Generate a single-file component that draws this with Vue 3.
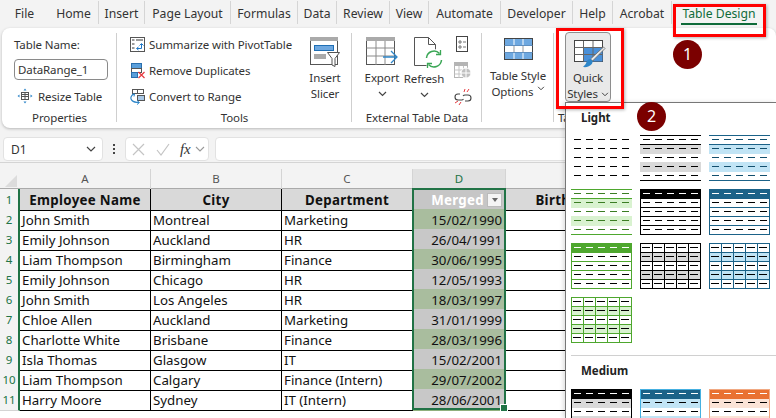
<template>
  <div class="excel">
    <div class="tabs">
      <div v-for="t in tabs" :key="t" class="tab" :class="{ active: t === 'Table Design' }">{{ t }}</div>
    </div>

    <div class="ribbon">
      <section class="group g-props">
        <div class="group-body props-body">
          <div class="field-label">Table Name:</div>
          <div class="name-input">DataRange_1</div>
          <div class="resize">
            <svg width="16" height="16" viewBox="0 0 16 16" fill="none">
              <rect x="4.500" y="4.500" width="7" height="7" stroke="#555" />
              <path d="M4.500 6.500h7M4.500 8.500h7M8 4.500v7" stroke="#555" />
              <path d="M8 .5 6.500 2.500h3zM8 15.500 6.500 13.500h3zM.5 8l2-1.500v3zM15.500 8l-2-1.500v3z" fill="#2e86c9" />
            </svg>
            <span>Resize Table</span>
          </div>
        </div>
        <div class="group-label">Properties</div>
      </section>

      <section class="group g-tools">
        <div class="group-body tools-body">
          <div class="tool-list">
            <div class="tool-row">
              <svg width="17" height="17" viewBox="0 0 17 17" fill="none">
                <rect x="1.500" y="1.500" width="14" height="14" stroke="#555" fill="#fff" />
                <path d="M3 3h2.500v2H3zM7 3h7v2H7zM3 7h2.500v2H3zM3 11h2.500v2H3z" fill="#9a9a9a" />
                <path d="M8 12.500h4.500V8M10.500 9.500 12.500 7.500l2 2M9.500 11 7.500 12.500 9.500 14" stroke="#1f78c8" />
              </svg>
              <span>Summarize with PivotTable</span>
            </div>
            <div class="tool-row">
              <svg width="17" height="17" viewBox="0 0 17 17" fill="none">
                <rect x="2.500" y="1.500" width="10" height="5" fill="#5a9fdb" stroke="#2a6fae" />
                <rect x="2.500" y="6.500" width="10" height="4" fill="#fff" stroke="#555" />
                <rect x="2.500" y="10.500" width="6" height="5" fill="#5a9fdb" stroke="#2a6fae" />
                <path d="m9.500 10 6 6M15.500 10l-6 6" stroke="#e6393f" stroke-width="1.200" />
              </svg>
              <span>Remove Duplicates</span>
            </div>
            <div class="tool-row">
              <svg width="17" height="17" viewBox="0 0 17 17" fill="none">
                <rect x="3.500" y="1.500" width="5" height="4" fill="#fff" stroke="#555" />
                <rect x="8.500" y="1.500" width="6" height="4" fill="#fff" stroke="#555" />
                <rect x="8.500" y="7.500" width="7" height="5" fill="#a9c8e6" stroke="#555" />
                <path d="M5 6C1.500 7.500 1 10.500 3 12.500c1.500 1.500 4 2 7 2" stroke="#2e86c9" stroke-width="1.200" />
                <path d="M3 6.500 5.500 6 5 8.500M8 12.500l2.500 2L8 16.500" stroke="#2e86c9" />
              </svg>
              <span>Convert to Range</span>
            </div>
          </div>
          <div class="big-btn slicer">
            <svg width="32" height="32" viewBox="0 0 32 32" fill="none">
              <rect x="1.500" y=".5" width="27" height="27" stroke="#555" fill="#fff" />
              <rect x="1" y="0" width="28" height="4" fill="#aaa" />
              <rect x="5.500" y="8.500" width="19" height="5" fill="#6ea8e0" stroke="#1f6fb5" />
              <rect x="5" y="17" width="12" height="5" fill="#aaa" />
              <path d="M18.500 15.500h12l-4.500 6v8l-3-1.500v-6.500z" fill="#fff" stroke="#555" />
            </svg>
            <span>Insert</span>
            <span>Slicer</span>
          </div>
        </div>
        <div class="group-label">Tools</div>
      </section>

      <section class="group g-ext">
        <div class="group-body ext-body">
          <div class="big-btn export">
            <svg width="32" height="31" viewBox="0 0 32 31" fill="none">
              <rect x=".5" y=".5" width="28" height="27" fill="#fff" stroke="#555" />
              <rect x="0" y="0" width="29" height="4" fill="#aaa" />
              <path d="M.5 11h28M.5 19h28M10 4v24M19 4v24" stroke="#8a8a8a" />
              <path d="M17 20h14M25 14l6 6-6 6" stroke="#2e86c9" stroke-width="1.300" fill="none" />
            </svg>
            <span>Export</span>
            <svg class="chev" width="9" height="6" viewBox="0 0 9 6" fill="none"><path d="m1 1 3.500 3.500L8 1" stroke="#444" stroke-width="1.200" /></svg>
          </div>
          <div class="big-btn refresh">
            <svg width="30" height="32" viewBox="0 0 30 32" fill="none">
              <path d="M1.500.5h14l7 7v21h-21z" fill="#fff" stroke="#555" />
              <path d="M15.500.5v7h7" stroke="#555" />
              <circle cx="21" cy="22" r="10" fill="#fff" />
              <path d="M13.500 21a7.500 7.500 0 0 1 13-4.500M28.500 23a7.500 7.500 0 0 1-13 4.500" stroke="#3aa655" stroke-width="1.500" />
              <path d="M27.500 13v4.500H23M14.500 31v-4.500H19" stroke="#3aa655" stroke-width="1.300" />
            </svg>
            <span>Refresh</span>
            <svg class="chev" width="9" height="6" viewBox="0 0 9 6" fill="none"><path d="m1 1 3.500 3.500L8 1" stroke="#444" stroke-width="1.200" /></svg>
          </div>
          <div class="small-icons">
            <svg width="16" height="17" viewBox="0 0 16 17" fill="none">
              <rect x="2.500" y=".5" width="11" height="15" stroke="#444" fill="#fff" />
              <path d="M5 5h2v2H5zM5 10h2v2H5z" stroke="#777" />
              <path d="M9 6h3M9 11h3" stroke="#777" />
            </svg>
            <svg width="18" height="17" viewBox="0 0 18 17" fill="none">
              <rect x=".5" y=".5" width="13" height="15" fill="#fff" stroke="#b5b5b5" />
              <rect x="0" y="0" width="14" height="4" fill="#b5b5b5" />
              <path d="M.5 8h13M.5 12h13M5 4v12M9.500 4v12" stroke="#c5c5c5" />
              <circle cx="12" cy="11" r="5" fill="#c0c0c0" stroke="#fff" />
              <path d="M7 11h10M12 6v10" stroke="#fff" />
            </svg>
            <svg width="18" height="17" viewBox="0 0 18 17" fill="none">
              <path d="M6 6H4a3 3 0 0 0 0 6h4a3 3 0 0 0 1.500-1M9 8a3 3 0 0 1 2-1h3a3 3 0 0 1 0 6h-3" stroke="#444" stroke-width="1.100" />
              <path d="M11 1 10 4M15 1l-2 3M5 17l2-3M1 15l3-2" stroke="#e6393f" />
            </svg>
          </div>
        </div>
        <div class="group-label">External Table Data</div>
      </section>

      <section class="group g-opts">
        <div class="group-body opts-body">
          <div class="big-btn options">
            <svg width="29" height="22" viewBox="0 0 29 22" fill="none">
              <rect x=".5" y=".5" width="28" height="21" fill="#fff" stroke="#444" />
              <rect x="1" y="1" width="27" height="6.500" fill="#6ea8e0" />
              <rect x="1" y="14.500" width="27" height="6.500" fill="#6ea8e0" />
              <path d="M10 1v6.500M19 1v6.500M10 14.500V21M19 14.500V21" stroke="#fff" />
              <path d="M10 7.500v7M19 7.500v7" stroke="#999" />
              <path d="M.5 7.500h28M.5 14.500h28" stroke="#5f8fc0" />
            </svg>
            <span>Table Style</span>
            <span class="with-chev">Options
              <svg width="8" height="5" viewBox="0 0 9 6" fill="none"><path d="m1 1 3.500 3.500L8 1" stroke="#444" stroke-width="1.200" /></svg>
            </span>
          </div>
        </div>
      </section>

      <section class="group g-styles">
        <div class="group-body styles-body">
          <div class="quick-btn">
            <svg width="32" height="30" viewBox="0 0 32 30" fill="none">
              <rect x=".5" y=".5" width="28" height="21" fill="#fff" stroke="#444" />
              <rect x="9.500" y="7.500" width="19" height="14" fill="#4a90d9" />
              <path d="M.5 7.500h28M.5 14.500h28M9.500 1v20M19 1v20" stroke="#666" />
              <path d="M29.500 7 31 8.500 18.500 21 16.500 19z" fill="#e8e8e8" stroke="#666" stroke-width=".8" />
              <path d="M16.500 19c-2.500.2-3.500 1.500-4 3-.5 2-2 3.500-3.500 5 3.500.5 7-.5 8.800-3 .7-1 .8-2 .7-3z" fill="#2e86c9" />
            </svg>
            <span>Quick</span>
            <span class="with-chev">Styles
              <svg width="8" height="5" viewBox="0 0 9 6" fill="none"><path d="m1 1 3.500 3.500L8 1" stroke="#444" stroke-width="1.200" /></svg>
            </span>
          </div>
        </div>
        <div class="group-label styles-label">Ta</div>
      </section>
    </div>

    <div class="formula-bar">
      <div class="name-box">
        <span>D1</span>
        <svg width="10" height="6" viewBox="0 0 10 6" fill="none"><path d="m1 1 4 4 4-4" stroke="#444" stroke-width="1.200" /></svg>
      </div>
      <div class="dots"><i></i><i></i><i></i></div>
      <div class="fx-box">
        <svg width="13" height="13" viewBox="0 0 13 13" fill="none"><path d="m1 1 11 11M12 1 1 12" stroke="#c4c4c4" stroke-width="1.200" /></svg>
        <svg width="14" height="13" viewBox="0 0 14 13" fill="none"><path d="m1 7 4 5 8-11" stroke="#c4c4c4" stroke-width="1.200" /></svg>
        <span class="fx">fx</span>
        <svg width="10" height="6" viewBox="0 0 10 6" fill="none"><path d="m1 1 4 4 4-4" stroke="#999" stroke-width="1.100" /></svg>
      </div>
      <div class="formula-input"></div>
    </div>

    <div class="sheet">
      <div class="col-heads">
        <div class="corner"><div class="tri"></div></div>
        <div v-for="c in columns" :key="c" class="col-head" :class="{ sel: c === 'D' }">{{ c }}</div>
      </div>
      <div class="sheet-row head-row">
        <div class="row-num">1</div>
        <div class="cell head">Employee Name</div>
        <div class="cell head">City</div>
        <div class="cell head">Department</div>
        <div class="cell head merged">
          <span>Merged</span>
          <span class="filter"><i></i></span>
        </div>
        <div class="cell head">Birth Date</div>
      </div>
      <div v-for="(r, i) in rows" :key="i" class="sheet-row">
        <div class="row-num">{{ i + 2 }}</div>
        <div class="cell">{{ r[0] }}</div>
        <div class="cell">{{ r[1] }}</div>
        <div class="cell">{{ r[2] }}</div>
        <div class="cell date" :class="i % 2 ? 'date-even' : 'date-odd'">{{ r[3] }}</div>
        <div class="cell"></div>
      </div>
      <div class="selection"><div class="handle"></div></div>
    </div>

    <div class="styles-menu">
      <div class="menu-title">Light</div>
      <div class="thumbs">
        <svg v-for="(t, i) in light" :key="i" width="61" height="46" viewBox="0 0 61 46" shape-rendering="crispEdges">
          <rect v-for="(p, j) in t" :key="j" :x="p.x" :y="p.y" :width="p.w" :height="p.h" :fill="p.c" />
        </svg>
      </div>
      <div class="menu-sep"></div>
      <div class="menu-title medium">Medium</div>
      <div class="thumbs">
        <svg v-for="(t, i) in medium" :key="i" width="61" height="46" viewBox="0 0 61 46" shape-rendering="crispEdges">
          <rect v-for="(p, j) in t" :key="j" :x="p.x" :y="p.y" :width="p.w" :height="p.h" :fill="p.c" />
        </svg>
      </div>
    </div>

    <div class="red-box box-tab"></div>
    <div class="red-box box-quick"></div>
    <div class="badge badge-1">1</div>
    <div class="badge badge-2">2</div>
  </div>
</template>

<script setup>
const tabs = ['File', 'Home', 'Insert', 'Page Layout', 'Formulas', 'Data', 'Review', 'View', 'Automate', 'Developer', 'Help', 'Acrobat', 'Table Design']
const columns = ['A', 'B', 'C', 'D', 'E']

const rows = [
  ['John Smith', 'Montreal', 'Marketing', '15/02/1990'],
  ['Emily Johnson', 'Auckland', 'HR', '26/04/1991'],
  ['Liam Thompson', 'Birmingham', 'Finance', '30/06/1995'],
  ['Emily Johnson', 'Chicago', 'HR', '12/05/1993'],
  ['John Smith', 'Los Angeles', 'HR', '18/03/1997'],
  ['Chloe Allen', 'Auckland', 'Marketing', '31/01/1999'],
  ['Charlotte White', 'Brisbane', 'Finance', '28/03/1996'],
  ['Isla Thomas', 'Glasgow', 'IT', '15/02/2001'],
  ['Liam Thompson', 'Calgary', 'Finance (Intern)', '29/07/2002'],
  ['Harry Moore', 'Sydney', 'IT (Intern)', '28/06/2001'],
]

const BLACK = '#000'
const BLUE = '#1b6288'
const GREEN = '#4ea72e'

// one thumbnail as a list of rects, 5 rows of 5 dashes
function thumb({ line, band, dash = BLACK, kind, border, head }) {
  const out = []
  const add = (x, y, w, h, c) => out.push({ x, y, w, h, c })
  const rowTop = i => i * 9

  if (band) {
    add(0, rowTop(1), 61, 10, band)
    add(0, rowTop(3), 61, 10, band)
  }
  if (kind === 'stripe') {
    add(0, 0, 61, 1, line)
    add(0, 9, 61, 1, line)
    add(0, 45, 61, 1, line)
  }
  if (kind === 'head' || kind === 'medium') add(0, 0, 61, 10, head)
  if (kind === 'head' || kind === 'grid') {
    for (let i = 1; i < 5; i++) add(0, rowTop(i), 61, 1, line)
  }
  if (kind === 'grid') {
    for (let j = 1; j < 5; j++) add(j * 12, 0, 1, 46, line)
  }
  if (kind === 'head' || kind === 'grid' || kind === 'medium') {
    const b = border || line
    add(0, 0, 61, 1, b)
    add(0, 45, 61, 1, b)
    add(0, 0, 1, 46, b)
    add(60, 0, 1, 46, b)
  }
  for (let i = 0; i < 5; i++) {
    for (let j = 0; j < 5; j++) {
      const white = (kind === 'head' || kind === 'medium') && i === 0
      if (kind === 'grid') add(2 + j * 12, 4 + i * 9, 8, 1, dash)
      else add(3 + j * 12, 4 + i * 9, 7, 1, white ? '#fff' : dash)
    }
  }
  return out
}

const light = [
  thumb({ kind: 'plain' }),
  thumb({ kind: 'stripe', line: BLACK, band: '#d9d9d9' }),
  thumb({ kind: 'stripe', line: BLUE, band: '#c1e4f5', dash: '#124f6e' }),
  thumb({ kind: 'stripe', line: GREEN, band: '#d9f2d0', dash: '#3b7d23' }),
  thumb({ kind: 'head', line: BLACK, head: BLACK }),
  thumb({ kind: 'head', line: BLUE, head: BLUE }),
  thumb({ kind: 'head', line: GREEN, head: GREEN }),
  thumb({ kind: 'grid', line: BLACK, band: '#d9d9d9' }),
  thumb({ kind: 'grid', line: BLUE, band: '#c1e4f5' }),
  thumb({ kind: 'grid', line: GREEN, band: '#d9f2d0' }),
]

const medium = [
  thumb({ kind: 'medium', head: BLACK, border: BLACK, band: '#d9d9d9' }),
  thumb({ kind: 'medium', head: BLUE, border: '#45b0e1', band: '#c1e4f5' }),
  thumb({ kind: 'medium', head: '#e97132', border: '#f1a983', band: '#fbe3d6' }),
]
</script>

<style>
html, body {
  margin: 0;
  background: #f3f3f3;
}
</style>

<style scoped>
.excel {
  position: relative;
  width: 776px;
  height: 418px;
  overflow: hidden;
  background: #f3f3f3;
  font-family: "Noto Sans", sans-serif;
  font-size: 11.5px;
  letter-spacing: -0.1px;
  color: #333;
}

/* tabs */
.tabs {
  display: grid;
  grid-template-columns: 49px 50px 46px 86px 67px 39px 53px 39px 72px 72px 40px 59px 94px;
  height: 28px;
}
.tab {
  position: relative;
  height: 23px;
  margin-top: 1px;
  text-align: center;
  line-height: 25px;
  font-size: 12.2px;
  letter-spacing: 0;
  border-right: 1px solid #d5d5d5;
  box-sizing: border-box;
}
.tab:first-child { border-right: 0; }
.tab.active {
  border-right: 0;
  color: #0f6b3a;
}
.tab.active::after {
  content: "";
  position: absolute;
  left: 9px;
  right: 9px;
  bottom: -1px;
  height: 2px;
  background: #0f6b3a;
}

/* ribbon */
.ribbon {
  display: flex;
  height: 100px;
  margin-left: 2px;
  background: #fff;
  border-radius: 8px;
  box-shadow: 0 1px 3px rgba(0, 0, 0, 0.25);
  box-sizing: border-box;
}
.group {
  display: flex;
  flex-direction: column;
  position: relative;
}
.group::after {
  content: "";
  position: absolute;
  right: 0;
  top: 5px;
  bottom: 6px;
  width: 1px;
  background: #cfcfcf;
}
.group-body {
  flex: 1;
  min-height: 0;
}
.group-label {
  height: 20px;
  line-height: 20px;
  text-align: center;
  white-space: nowrap;
}
.g-props { width: 115px; }
.g-tools { width: 235px; }
.g-ext { width: 130px; }
.g-opts { width: 72px; }
.g-styles { flex: 1; }
.g-styles::after { display: none; }
.styles-label {
  text-align: left;
  padding-left: 4px;
}

.props-body {
  display: flex;
  flex-direction: column;
  padding: 8px 0 0 12px;
}
.field-label { line-height: 18px; }
.name-input {
  width: 94px;
  height: 21px;
  margin-top: 5px;
  padding-left: 3px;
  box-sizing: border-box;
  border: 1px solid #8a8a8a;
  border-radius: 4px;
  line-height: 19px;
  white-space: nowrap;
}
.resize {
  display: flex;
  align-items: center;
  gap: 5px;
  margin: 8px 0 0 3px;
  white-space: nowrap;
}

.tools-body {
  display: flex;
  padding-left: 12px;
}
.tool-list {
  width: 178px;
  padding-top: 7px;
}
.tool-row {
  display: flex;
  align-items: center;
  gap: 3px;
  height: 18px;
  margin-bottom: 8px;
  white-space: nowrap;
}
.big-btn {
  display: flex;
  flex-direction: column;
  align-items: center;
  line-height: 16px;
  white-space: nowrap;
}
.big-btn svg { flex-shrink: 0; }
.slicer { padding-top: 9px; width: 36px; }
.slicer svg { margin-bottom: 1px; }

.ext-body { display: flex; }
.export { margin-left: 11px; width: 38px; padding-top: 9px; }
.export svg:first-child { margin-bottom: 2px; }
.refresh { margin-left: 3px; width: 40px; padding-top: 9px; }
.refresh svg:first-child { margin: 0 0 2px 8px; }
.chev { margin-top: 5px; }
.small-icons {
  display: flex;
  flex-direction: column;
  gap: 9px;
  margin: 8px 0 0 10px;
}

.opts-body { padding-top: 10px; }
.options svg:first-child { margin-bottom: 8px; }
.with-chev {
  display: inline-flex;
  align-items: center;
  gap: 3px;
}

.styles-body { padding-top: 4px; }
.quick-btn {
  display: flex;
  flex-direction: column;
  align-items: center;
  width: 46px;
  height: 70px;
  margin-left: 11px;
  padding-top: 7px;
  box-sizing: border-box;
  background: #e9e9e9;
  border: 1px solid #8e8e8e;
  border-radius: 4px;
  line-height: 16px;
}
.quick-btn > svg { flex-shrink: 0; margin-left: 3px; }

/* formula bar */
.formula-bar {
  display: flex;
  align-items: center;
  height: 26px;
  margin-top: 8px;
  padding-left: 3px;
}
.name-box, .fx-box, .formula-input {
  height: 24px;
  box-sizing: border-box;
  background: #fff;
  border: 1px solid #e2e2e2;
  border-radius: 4px;
}
.name-box {
  display: flex;
  align-items: center;
  justify-content: space-between;
  width: 100px;
  padding: 0 6px 0 7px;
  font-size: 12px;
}
.dots {
  display: flex;
  flex-direction: column;
  gap: 2px;
  width: 22px;
  align-items: center;
}
.dots i {
  width: 2px;
  height: 2px;
  background: #444;
}
.fx-box {
  display: flex;
  align-items: center;
  width: 84px;
  padding-left: 6px;
  gap: 11px;
}
.fx {
  font-family: "Liberation Serif", serif;
  font-style: italic;
  font-size: 15px;
  color: #333;
  margin-left: -1px;
  margin-right: -9px;
}
.fx-box svg:last-child { margin-left: 2px; }
.formula-input {
  width: 500px;
  margin-left: 6px;
}

/* sheet */
.sheet {
  position: relative;
  background: #fff;
  height: 256px;
  font-size: 13.3px;
  letter-spacing: 0;
  color: #111;
  border-top: 1px solid #d4d4d4;
  box-sizing: border-box;
}
.col-heads, .sheet-row {
  display: grid;
  grid-template-columns: 20px 131px 131px 131px 93px 131px;
}
.col-heads {
  height: 26px;
  background: #f3f3f3;
  padding-top: 6px;
  box-sizing: border-box;
  border-bottom: 1px solid #aaa;
}
.corner { position: relative; }
.tri {
  position: absolute;
  right: 3px;
  bottom: 2px;
  width: 0;
  height: 0;
  border-left: 12px solid transparent;
  border-bottom: 12px solid #dcdcdc;
}
.col-head {
  text-align: center;
  font-size: 11.5px;
  line-height: 20px;
  color: #555;
  border-right: 1px solid #d4d4d4;
  box-sizing: border-box;
}
.col-head.sel {
  background: #e1e1e1;
  color: #217346;
}
.sheet-row { height: 20px; }
.row-num {
  background: #f3f3f3;
  text-align: center;
  font-size: 11.5px;
  line-height: 21px;
  color: #217346;
  border-bottom: 1px solid #d4d4d4;
  border-right: 2px solid #217346;
  box-sizing: border-box;
}
.cell {
  padding-left: 2px;
  line-height: 22px;
  white-space: nowrap;
  overflow: hidden;
  box-sizing: border-box;
  border-right: 1px solid #000;
  border-bottom: 1px solid #000;
}
.head {
  background: #d9d9d9;
  text-align: center;
  font-weight: 700;
  letter-spacing: 0.3px;
  padding-left: 0;
}
.merged {
  display: flex;
  align-items: center;
  justify-content: flex-end;
  gap: 3px;
  padding-right: 3px;
  background: #c6c6c6;
  color: #fff;
  border-bottom-color: #8fb07d;
}
.filter {
  display: flex;
  align-items: center;
  justify-content: center;
  width: 15px;
  height: 14px;
  background: #f4f4f4;
  border: 1px solid #bbb;
  box-sizing: border-box;
}
.filter i {
  width: 0;
  height: 0;
  border-left: 3.5px solid transparent;
  border-right: 3.5px solid transparent;
  border-top: 4px solid #666;
}
.date {
  text-align: right;
  padding-right: 3px;
  border-bottom-color: #8fb07d;
}
.date-odd { background: #a9bd9e; }
.date-even { background: #c8c8c8; }
.selection {
  position: absolute;
  left: 412px;
  top: 25px;
  width: 94px;
  height: 222px;
  box-sizing: border-box;
  border: 2px solid #217346;
  pointer-events: none;
}
.handle {
  position: absolute;
  right: -4px;
  bottom: -4px;
  width: 6px;
  height: 6px;
  background: #217346;
  border: 1px solid #fff;
}

/* quick styles dropdown */
.styles-menu {
  position: absolute;
  left: 565px;
  top: 102px;
  width: 211px;
  height: 316px;
  padding: 7px 6px 0 5px;
  box-sizing: border-box;
  background: #fff;
  border-left: 1px solid #777;
  border-top: 1px solid #777;
  box-shadow: -2px 0 4px rgba(0, 0, 0, 0.12);
  overflow: hidden;
}
.menu-title {
  height: 16px;
  line-height: 16px;
  padding-left: 10px;
  margin-bottom: 9px;
  font-weight: 700;
  letter-spacing: 0;
  color: #222;
}
.menu-title.medium { margin: 7px 0 10px; }
.thumbs {
  display: grid;
  grid-template-columns: repeat(3, 61px);
  column-gap: 8px;
  row-gap: 8px;
}
.menu-sep {
  height: 1px;
  margin: 12px -6px 0 0;
  background: #d0d0d0;
}

/* callouts */
.red-box {
  position: absolute;
  box-sizing: border-box;
  border: 3px solid #f00;
  box-shadow: 1px 1px 3px rgba(0, 0, 0, 0.3);
}
.box-tab {
  left: 673px;
  top: 4px;
  width: 93px;
  height: 33px;
}
.box-quick {
  left: 556px;
  top: 28px;
  width: 68px;
  height: 81px;
}
.badge {
  position: absolute;
  width: 29px;
  height: 29px;
  border-radius: 50%;
  background: #7b0000;
  color: #fff;
  text-align: center;
  line-height: 29px;
  font-size: 16px;
  letter-spacing: 0;
}
.badge-1 {
  left: 673px;
  top: 40px;
}
.badge-2 {
  left: 637px;
  top: 102px;
}
</style>
